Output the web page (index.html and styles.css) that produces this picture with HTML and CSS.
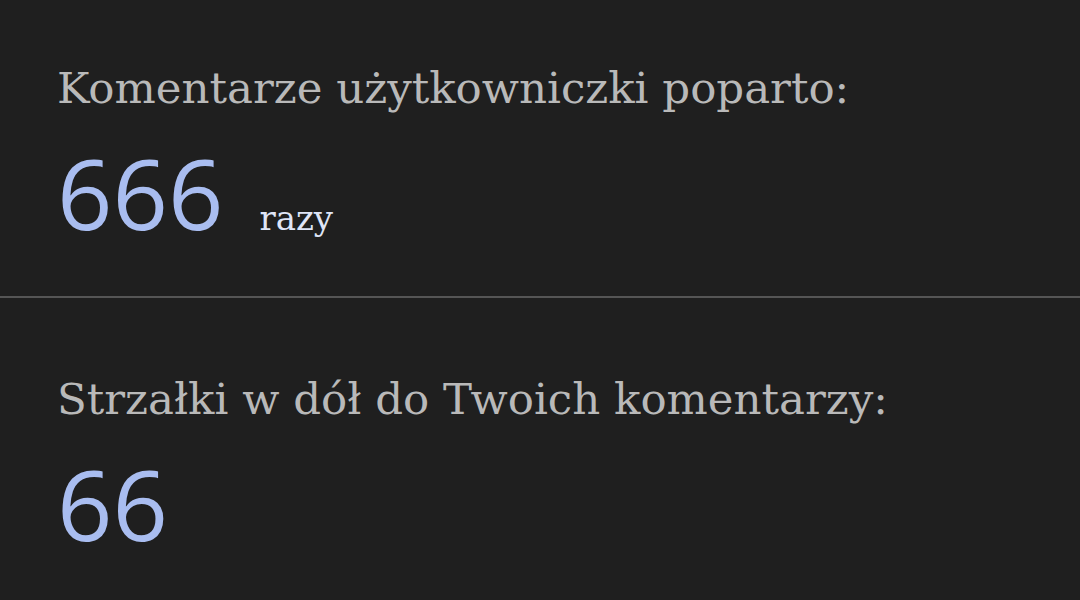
FILE: index.html
```html
<!DOCTYPE html>
<html lang="pl">
<head>
<meta charset="utf-8">
<link rel="stylesheet" href="styles.css">
</head>
<body>
<section class="stat stat-first">
  <div class="label">Komentarze użytkowniczki poparto:</div>
  <div class="value-row"><span class="value">666</span><span class="unit">razy</span></div>
</section>
<section class="stat stat-second">
  <div class="label">Strzałki w dół do Twoich komentarzy:</div>
  <div class="value-row"><span class="value">66</span></div>
</section>
</body>
</html>
```
FILE: styles.css
```css
html, body {
  margin: 0;
  padding: 0;
  background: #1f1f1f;
  width: 1080px;
  height: 600px;
  overflow: hidden;
}
.stat {
  padding-left: 57px;
}
.stat-first {
  padding-top: 62px;
  height: 234px;
  border-bottom: 2px solid #555555;
}
.stat-second {
  padding-top: 75px;
}
.label {
  font-family: "DejaVu Serif", serif;
  font-size: 43.5px;
  line-height: 52px;
  color: #b9b9b9;
}
.value-row {
  display: flex;
  align-items: baseline;
  margin-top: 23px;
}
.value {
  font-family: "Open Sans", sans-serif;
  font-size: 97px;
  line-height: 110px;
  color: #a9bdf0;
}
.unit {
  font-family: "DejaVu Serif", serif;
  font-size: 34px;
  color: #dfe5f7;
  margin-left: 36px;
}
```
